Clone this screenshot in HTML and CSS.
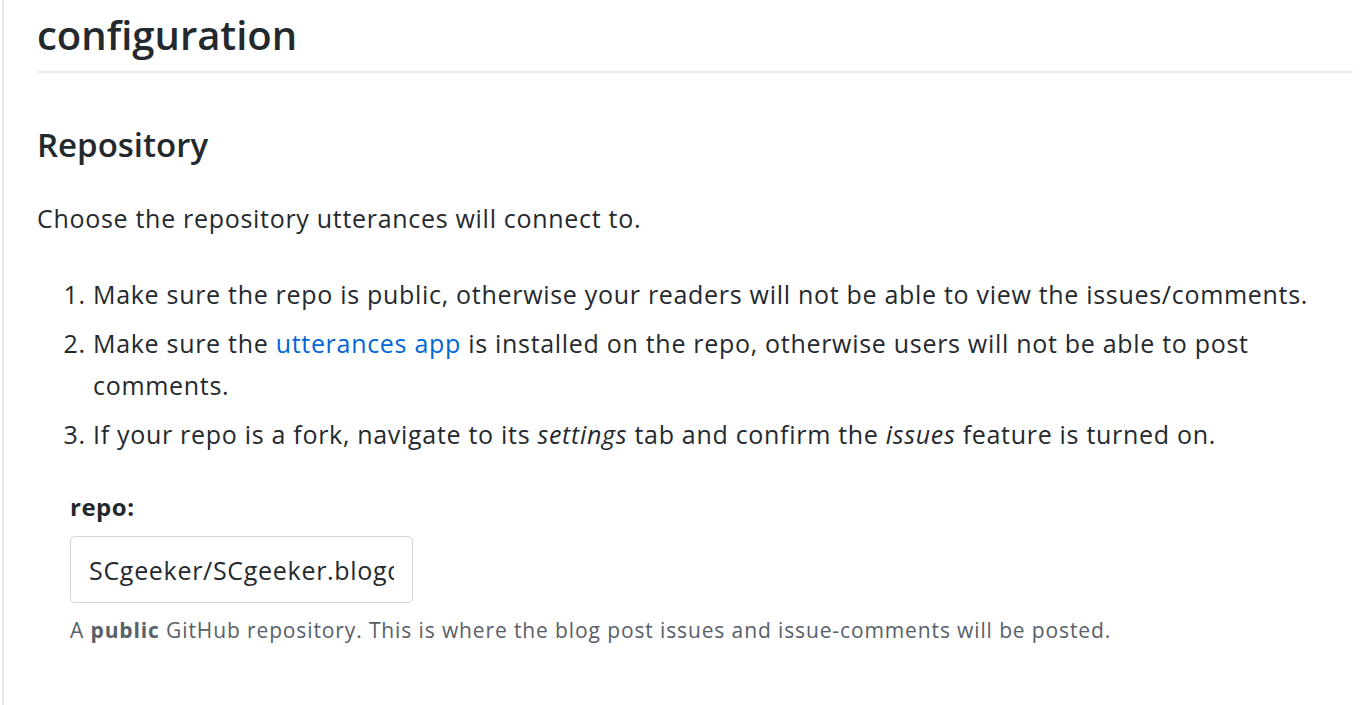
FILE: index.html
```html
<!DOCTYPE html>
<html>
<head>
<meta charset="utf-8">
<link rel="stylesheet" href="styles.css">
</head>
<body>
<main class="page">
  <h1 class="title">configuration</h1>
  <h2 class="section">Repository</h2>
  <p class="lead">Choose the repository utterances will connect to.</p>
  <ol class="steps">
    <li>Make sure the repo is public, otherwise your readers will not be able to view the issues/comments.</li>
    <li>Make sure the <a class="link" href="#">utterances app</a> is installed on the repo, otherwise users will not be able to post comments.</li>
    <li>If your repo is a fork, navigate to its <em>settings</em> tab and confirm the <em>issues</em> feature is turned on.</li>
  </ol>
  <div class="form-group">
    <label class="label" for="repo">repo:</label>
    <input class="input" id="repo" type="text" value="SCgeeker/SCgeeker.blogdown">
    <p class="note">A <strong>public</strong> GitHub repository. This is where the blog post issues and issue-comments will be posted.</p>
  </div>
</main>
</body>
</html>
```

FILE: styles.css
```css
html, body {
  margin: 0;
  padding: 0;
  background: #ffffff;
}
body {
  font-family: "Open Sans", "Noto Sans", sans-serif;
  color: #24292e;
  height: 705px;
  overflow: hidden;
}
.page {
  margin-left: 2px;
  border-left: 2px solid #e4e6ea;
  padding: 0 7px 0 33px;
  min-height: 705px;
  box-sizing: border-box;
}
.title {
  margin: 0;
  padding-top: 9px;
  padding-bottom: 10px;
  font-size: 40px;
  font-weight: 600;
  line-height: 52px;
  border-bottom: 2px solid #eaeaf0;
}
.section {
  margin: 50px 0 0;
  font-size: 33px;
  font-weight: 600;
  line-height: 44px;
}
.lead {
  margin: 33px 0 0;
  font-size: 25px;
  letter-spacing: 0.7px;
  line-height: 36px;
}
.steps {
  margin: 37px 0 0;
  padding-left: 56px;
  font-size: 25px;
  letter-spacing: 0.7px;
  line-height: 42px;
}
.steps li + li {
  margin-top: 7px;
}
.link {
  color: #0366d6;
  text-decoration: none;
}
.form-group {
  margin: 37px 0 0 33px;
}
.label {
  display: block;
  font-size: 24px;
  font-weight: 700;
  letter-spacing: 0.5px;
  line-height: 30px;
}
.input {
  display: block;
  margin-top: 14px;
  width: 343px;
  height: 67px;
  box-sizing: border-box;
  padding: 0 18px;
  border: 1px solid #d1d5da;
  border-radius: 5px;
  font-family: "Open Sans", "Noto Sans", sans-serif;
  font-size: 25px;
  letter-spacing: 0.7px;
  color: #24292e;
  background: #fff;
}
.note {
  margin: 13px 0 0;
  font-size: 21px;
  letter-spacing: 0.88px;
  line-height: 28px;
  color: #586069;
}
.note strong {
  font-weight: 700;
}
```
